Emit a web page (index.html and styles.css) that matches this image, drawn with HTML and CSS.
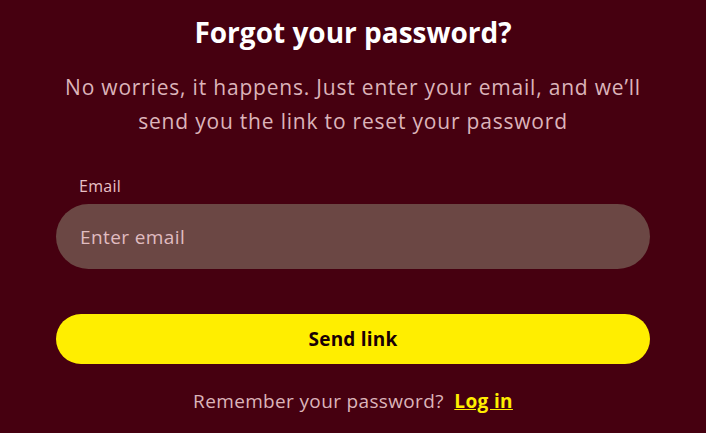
FILE: index.html
```html
<!DOCTYPE html>
<html lang="en">
<head>
<meta charset="utf-8">
<title>Forgot your password?</title>
<link rel="stylesheet" href="styles.css">
</head>
<body>
<main class="page">
  <h1 class="title">Forgot your password?</h1>
  <p class="subtitle">No worries, it happens. Just enter your email, and we’ll send you the link to reset your password</p>
  <form class="form">
    <label class="label" for="email">Email</label>
    <input class="input" id="email" type="email" placeholder="Enter email">
    <button class="button" type="button">Send link</button>
  </form>
  <p class="footer">Remember your password?&nbsp; <a class="link" href="#">Log in</a></p>
</main>
</body>
</html>
```

FILE: styles.css
```css
html, body {
  margin: 0;
  padding: 0;
  background: #460010;
}
body {
  font-family: "Open Sans", Lato, sans-serif;
  color: #ffffff;
}
.page {
  width: 594px;
  margin: 0 auto;
  padding-top: 14px;
  display: flex;
  flex-direction: column;
  align-items: center;
}
.title {
  margin: 0;
  font-size: 28px;
  line-height: 36px;
  font-weight: 700;
  color: #ffffff;
}
.subtitle {
  margin: 20px 0 0;
  width: 594px;
  text-align: center;
  font-size: 21px;
  letter-spacing: 0.8px;
  line-height: 34px;
  color: #dcb4ba;
}
.form {
  width: 100%;
  display: flex;
  flex-direction: column;
  margin-top: 38px;
}
.label {
  margin-left: 23px;
  font-size: 16px;
  letter-spacing: 0.3px;
  line-height: 20px;
  color: #e8c0c6;
}
.input {
  margin-top: 8px;
  height: 65px;
  box-sizing: border-box;
  border: none;
  border-radius: 33px;
  background: #6b4744;
  padding: 0 24px;
  font-family: inherit;
  font-size: 19px;
  letter-spacing: 0.4px;
  color: #ffffff;
  outline: none;
}
.input::placeholder {
  color: #e0bcc0;
}
.button {
  margin-top: 45px;
  height: 50px;
  border: none;
  border-radius: 25px;
  background: #ffee00;
  color: #1a0005;
  font-family: inherit;
  font-size: 19px;
  letter-spacing: 0.2px;
  font-weight: 700;
}
.footer {
  margin: 24px 0 0;
  font-size: 19px;
  letter-spacing: 0.35px;
  line-height: 26px;
  color: #dcb4ba;
}
.link {
  color: #ffee00;
  font-weight: 700;
  text-decoration: underline;
}
```
